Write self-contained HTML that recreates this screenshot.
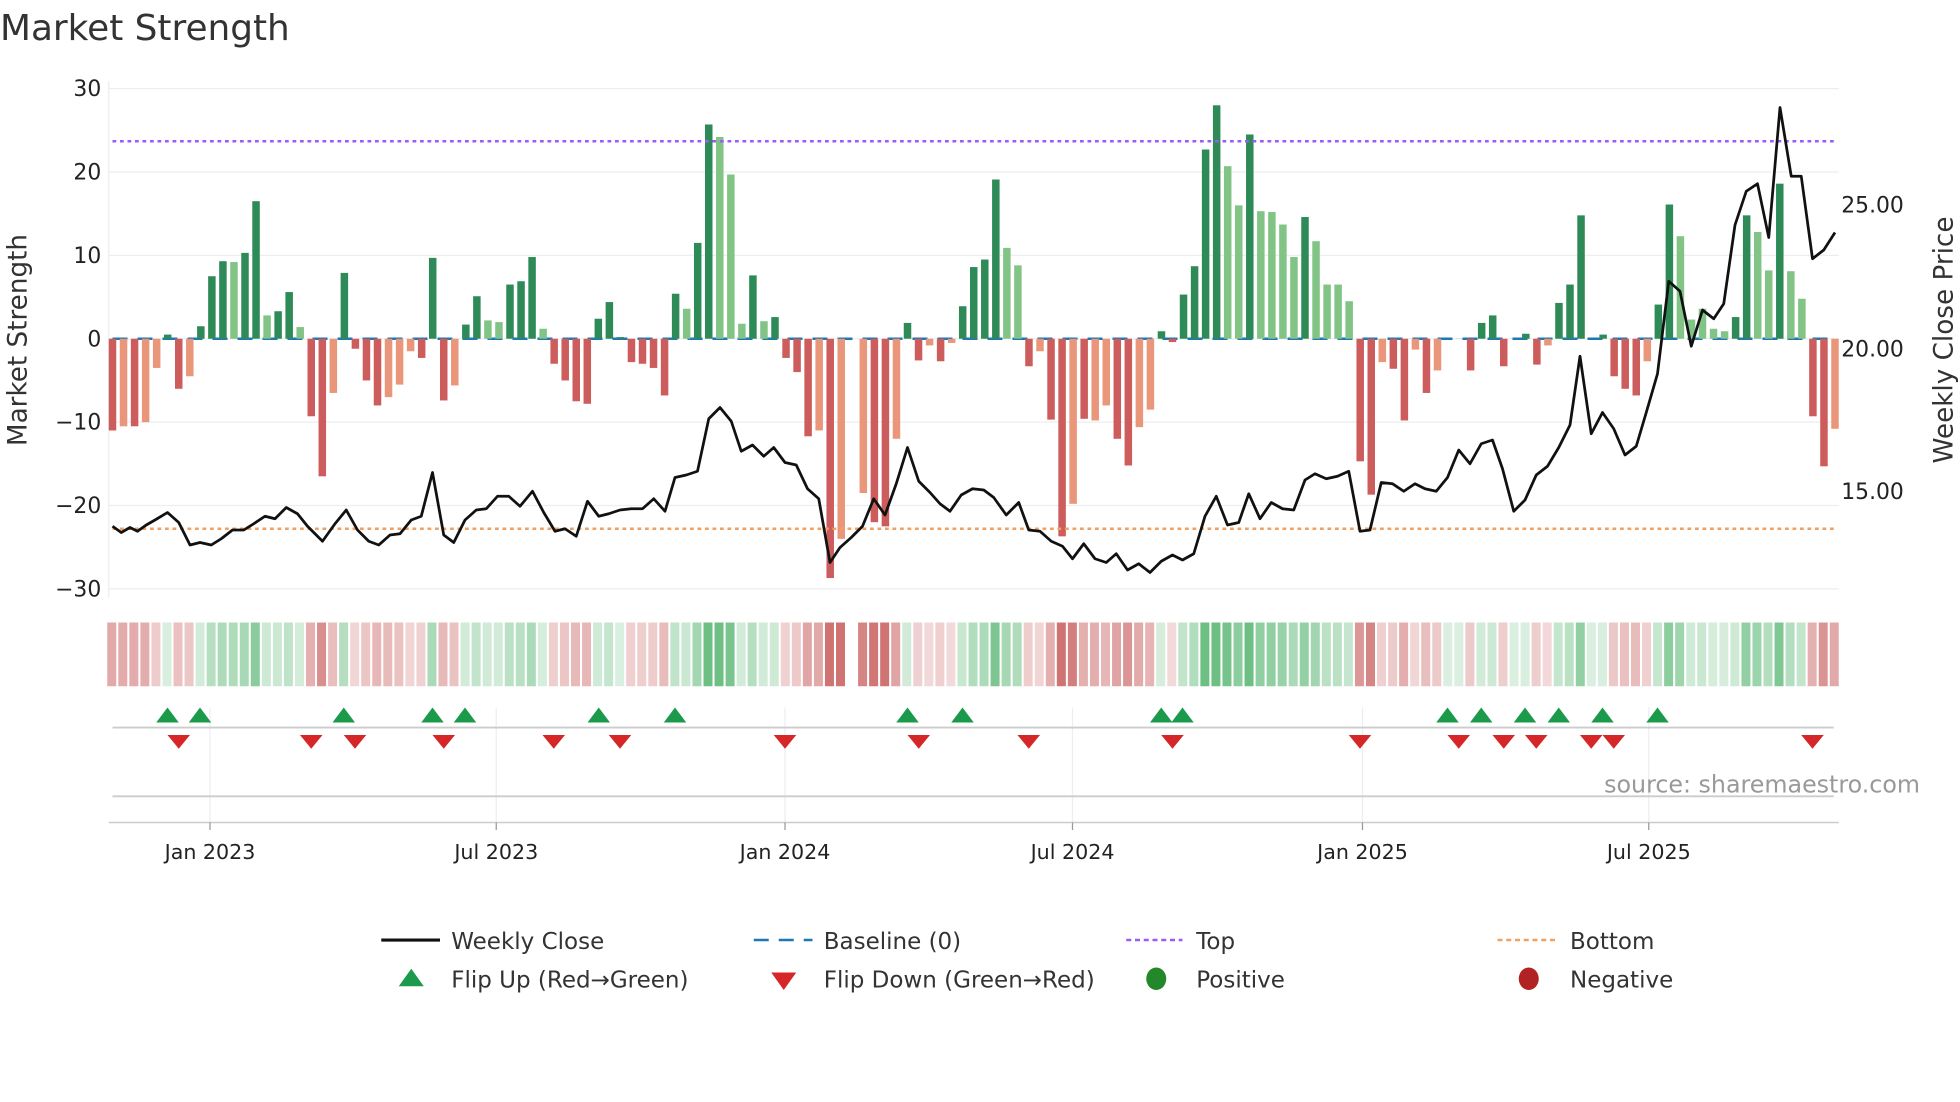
<!DOCTYPE html>
<html><head><meta charset="utf-8"><style>
html,body{margin:0;padding:0;background:#fff;width:1960px;height:1102px;overflow:hidden}
svg{display:block;font-family:"DejaVu Sans","Liberation Sans",sans-serif}
</style></head><body>
<svg id="s" width="1960" height="1102" viewBox="0 0 1568 881.6" xmlns="http://www.w3.org/2000/svg">
<text x="0" y="32" font-size="28.7" fill="#333">Market Strength</text>
<g id="grid" stroke="#eceef0" stroke-width="1"></g>
<g id="bars"></g>
<g id="heat"></g>
<g id="mk"></g>
<g font-size="17.5" fill="#222" id="ylab"></g>
<text transform="translate(21,272) rotate(-90)" font-size="21" fill="#333" text-anchor="middle">Market Strength</text>
<text transform="translate(1562,272) rotate(-90)" font-size="21" fill="#333" text-anchor="middle">Weekly Close Price</text>
<g font-size="17.5" fill="#222">
<text x="1473" y="170">25.00</text><text x="1473" y="285">20.00</text><text x="1473" y="399">15.00</text>
</g>
<text x="1536" y="634" font-size="19" fill="#999" text-anchor="end">source: sharemaestro.com</text>
<g font-size="16.5" fill="#222" text-anchor="middle">
<text x="168" y="687">Jan 2023</text><text x="397" y="687">Jul 2023</text><text x="628" y="687">Jan 2024</text><text x="858" y="687">Jul 2024</text><text x="1090" y="687">Jan 2025</text><text x="1319" y="687">Jul 2025</text>
</g>
<g font-size="18.4" fill="#333">
<line x1="305" y1="752" x2="352" y2="752" stroke="#111" stroke-width="2.5"/><text x="361" y="759">Weekly Close</text>
<line x1="603" y1="752" x2="650" y2="752" stroke="#1f77b4" stroke-width="2" stroke-dasharray="12,8"/><text x="659" y="759">Baseline (0)</text>
<line x1="901" y1="752" x2="946" y2="752" stroke="#9b5cf6" stroke-width="2" stroke-dasharray="4,3"/><text x="957" y="759">Top</text>
<line x1="1198" y1="752" x2="1244" y2="752" stroke="#f0a060" stroke-width="2" stroke-dasharray="4,3"/><text x="1256" y="759">Bottom</text>
<polygon points="319,789 339,789 329,775" fill="#1a9a4a"/><text x="361" y="790">Flip Up (Red→Green)</text>
<polygon points="617,778 637,778 627,792" fill="#d62728"/><text x="659" y="790">Flip Down (Green→Red)</text>
<ellipse cx="925" cy="783" rx="8" ry="9" fill="#22882a"/><text x="957" y="790">Positive</text>
<ellipse cx="1223" cy="783" rx="8" ry="9" fill="#b22222"/><text x="1256" y="790">Negative</text>
</g>
</svg>
<script>
var NS="http://www.w3.org/2000/svg";
function el(p,t,a){var e=document.createElementNS(NS,t);for(var k in a)e.setAttribute(k,a[k]);document.getElementById(p).appendChild(e);return e;}
[30,20,10,0,-10,-20,-30].forEach(function(v){var y=271-v*6.67;el("grid","line",{x1:87,x2:1471,y1:y,y2:y});
var t=el("ylab","text",{x:81,y:y+6,"text-anchor":"end"});t.textContent=(v<0?"\u2212"+(-v):v);});
el("grid","line",{x1:87,x2:87,y1:65,y2:478});
[168,397,628,858,1090,1319].forEach(function(x){el("grid","line",{x1:x,x2:x,y1:566,y2:658});});
var V=[[-11,'r'],[-10.5,'o'],[-10.5,'r'],[-10,'o'],[-3.5,'o'],[0.5,'g'],[-6,'r'],[-4.5,'o'],[1.5,'g'],[7.5,'g'],[9.3,'g'],[9.2,'l'],[10.3,'g'],[16.5,'g'],[2.8,'l'],[3.3,'g'],[5.6,'g'],[1.4,'l'],[-9.3,'r'],[-16.5,'r'],[-6.5,'o'],[7.9,'g'],[-1.2,'r'],[-5,'r'],[-8,'r'],[-7,'o'],[-5.5,'o'],[-1.5,'o'],[-2.3,'r'],[9.7,'g'],[-7.4,'r'],[-5.6,'o'],[1.7,'g'],[5.1,'g'],[2.2,'l'],[2,'l'],[6.5,'g'],[6.9,'g'],[9.8,'g'],[1.2,'l'],[-3,'r'],[-5,'r'],[-7.5,'r'],[-7.8,'r'],[2.4,'g'],[4.4,'g'],[0.2,'g'],[-2.8,'r'],[-3,'r'],[-3.5,'r'],[-6.8,'r'],[5.4,'g'],[3.6,'l'],[11.5,'g'],[25.7,'g'],[24.2,'l'],[19.7,'l'],[1.8,'l'],[7.6,'g'],[2.1,'l'],[2.6,'g'],[-2.3,'r'],[-4,'r'],[-11.7,'r'],[-11,'o'],[-28.7,'r'],[-24,'o'],[0,'x'],[-18.5,'o'],[-22,'r'],[-22.5,'r'],[-12,'o'],[1.9,'g'],[-2.6,'r'],[-0.8,'o'],[-2.7,'r'],[-0.5,'o'],[3.9,'g'],[8.6,'g'],[9.5,'g'],[19.1,'g'],[10.9,'l'],[8.8,'l'],[-3.3,'r'],[-1.5,'o'],[-9.7,'r'],[-23.7,'r'],[-19.8,'o'],[-9.6,'r'],[-9.8,'o'],[-8,'o'],[-12,'r'],[-15.2,'r'],[-10.6,'o'],[-8.5,'o'],[0.9,'g'],[-0.4,'r'],[5.3,'g'],[8.7,'g'],[22.7,'g'],[28,'g'],[20.7,'l'],[16,'l'],[24.5,'g'],[15.3,'l'],[15.2,'l'],[13.7,'l'],[9.8,'l'],[14.6,'g'],[11.7,'l'],[6.5,'l'],[6.5,'l'],[4.5,'l'],[-14.7,'r'],[-18.7,'r'],[-2.8,'o'],[-3.6,'r'],[-9.8,'r'],[-1.3,'o'],[-6.5,'r'],[-3.8,'o'],[0,'g'],[0,'g'],[-3.8,'r'],[1.9,'g'],[2.8,'g'],[-3.3,'r'],[0,'g'],[0.6,'g'],[-3.1,'r'],[-0.8,'o'],[4.3,'g'],[6.5,'g'],[14.8,'g'],[0,'g'],[0.5,'g'],[-4.5,'r'],[-6,'r'],[-6.8,'r'],[-2.7,'o'],[4.1,'g'],[16.1,'g'],[12.3,'l'],[2.3,'l'],[3.6,'l'],[1.2,'l'],[0.9,'l'],[2.6,'g'],[14.8,'g'],[12.8,'l'],[8.2,'l'],[18.6,'g'],[8.1,'l'],[4.8,'l'],[-9.3,'r'],[-15.3,'r'],[-10.8,'o']];
var C={g:'#2e8b57',l:'#82c485',r:'#cd5c5c',o:'#e9967a'};
var n=V.length,step=(1468-90)/(n-1);
el("bars","line",{x1:90,x2:1468,y1:271,y2:271,stroke:"#1f77b4","stroke-width":2,"stroke-dasharray":"12,8"});
V.forEach(function(d,i){var x=90+i*step,v=d[0];
if(d[1]!='x'){var h=Math.abs(v)*6.67,y=v>=0?271-h:271;el("bars","rect",{x:x-3,y:y,width:6,height:Math.max(h,0.1),fill:C[d[1]]});}
if(d[1]=='x')return;
var a=Math.min(1,0.25+Math.abs(v)/30);var col;
if(v>=0||d[1]=='g'||d[1]=='l'){var t=a;col="rgb("+Math.round(255-(255-60)*t*0.75)+","+Math.round(255-(255-170)*t*0.75)+","+Math.round(255-(255-90)*t*0.75)+")";}
else{var t=a;col="rgb("+Math.round(255-(255-200)*t*0.85)+","+Math.round(255-(255-90)*t*0.85)+","+Math.round(255-(255-90)*t*0.85)+")";}
el("heat","rect",{x:x-4.2,y:498,width:7.2,height:51,fill:col});
});
el("mk","line",{x1:90,x2:1468,y1:113,y2:113,stroke:"#9b5cf6","stroke-width":2,"stroke-dasharray":"3,3"});
el("mk","line",{x1:90,x2:1468,y1:423,y2:423,stroke:"#f0a060","stroke-width":2,"stroke-dasharray":"3,3"});
var P="90,421 97,426 104,422 110,425 117,420 124,416 134,410 143,418 152,436 160,434 169,436 177,431 186,424 195,424 203,419 212,413 220,415 229,406 238,411 246,421 258,433 268,419 277,408 286,424 295,433 303,436 312,428 320,427 329,416 337,413 346,378 355,428 363,434 372,416 381,408 389,407 398,397 407,397 416,405 426,393 435,410 444,425 452,423 461,429 470,401 479,413 487,411 496,408 505,407 514,407 523,399 532,409 540,382 549,380 558,377 567,335 576,326 585,337 593,361 602,356 611,365 619,358 628,370 637,372 646,391 655,399 664,450 672,438 681,430 690,421 699,399 708,412 717,387 726,358 735,385 744,394 752,403 760,409 769,396 778,391 787,392 795,398 805,412 815,402 823,424 832,425 841,433 850,437 858,447 867,435 876,447 885,450 893,443 902,456 911,451 920,458 929,449 938,444 946,448 955,443 964,413 973,397 982,420 991,418 999,395 1008,415 1017,402 1026,407 1035,408 1044,384 1052,379 1061,383 1070,381 1079,377 1088,425 1096,424 1105,386 1114,387 1123,393 1132,387 1140,391 1149,393 1158,382 1167,360 1176,371 1185,355 1194,352 1202,375 1211,409 1220,400 1229,380 1238,373 1247,358 1256,340 1264,285 1273,347 1282,330 1291,343 1300,364 1309,357 1317,330 1326,299 1335,225 1344,233 1353,277 1362,248 1371,255 1379,243 1388,180 1397,153 1406,147 1415,190 1424,86 1433,141 1441,141 1450,207 1459,200 1468,186";
el("mk","polyline",{points:P,fill:"none",stroke:"#111","stroke-width":2.2,"stroke-linejoin":"round"});
el("mk","line",{x1:90,x2:1467,y1:582,y2:582,stroke:"#ccc","stroke-width":1.5});
el("mk","line",{x1:90,x2:1467,y1:637,y2:637,stroke:"#ccc","stroke-width":1.5});
el("mk","line",{x1:87,x2:1471,y1:658,y2:658,stroke:"#ccc","stroke-width":1.2});
[168,397,628,858,1090,1319].forEach(function(x){el("mk","line",{x1:x,x2:x,y1:658,y2:664,stroke:"#999"});});
[134,160,275,346,372,479,540,726,770,929,946,1158,1185,1220,1247,1282,1326].forEach(function(x){el("mk","polygon",{points:(x-9)+",578 "+(x+9)+",578 "+x+",566",fill:"#1a9a4a"});});
[143,249,284,355,443,496,628,735,823,938,1088,1167,1203,1229,1273,1291,1450].forEach(function(x){el("mk","polygon",{points:(x-9)+",588 "+(x+9)+",588 "+x+",599",fill:"#d62728"});});
</script>
</body></html>
